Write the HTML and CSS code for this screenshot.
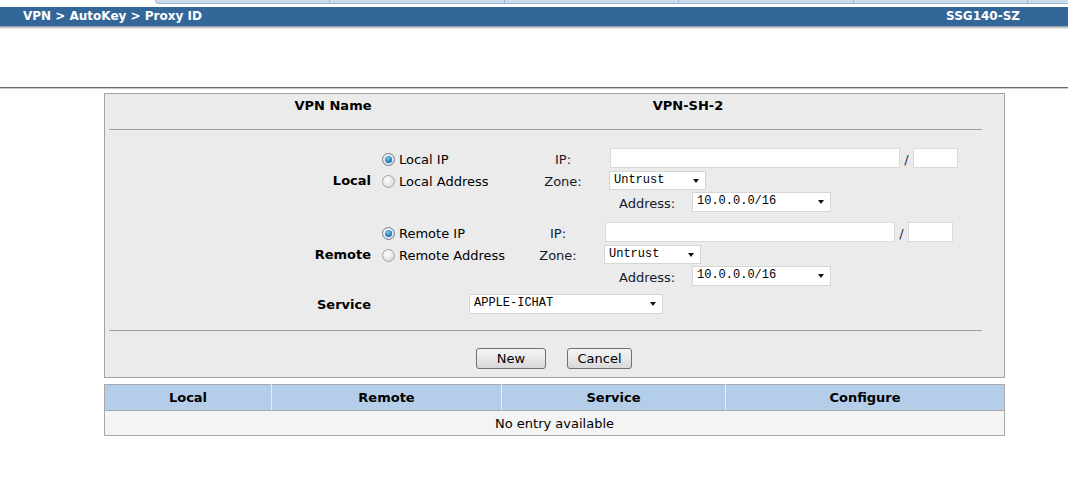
FILE: index.html
```html
<!DOCTYPE html>
<html>
<head>
<meta charset="utf-8">
<link rel="stylesheet" href="styles.css">
</head>
<body>
<div class="topnav">
  <div class="tabs">
    <span class="tab first"></span><span class="tab"></span><span class="tab"></span><span class="tab"></span><span class="tab"></span><span class="tab last"></span>
  </div>
  <div class="titlebar">
    <span class="crumb">VPN &gt; AutoKey &gt; Proxy ID</span>
    <span class="device">SSG140-SZ</span>
  </div>
  <div class="shadow"></div>
</div>
<div class="divider"></div>

<div class="formbox">
  <div class="namerow">
    <div class="namecol">VPN Name</div>
    <div class="valcol">VPN-SH-2</div>
  </div>
  <div class="rule"></div>

  <div class="section local">
    <div class="seclabel">Local</div>
    <div class="rows">
      <div class="row">
        <label class="radio"><span class="dot on"></span>Local IP</label>
        <span class="flabel">IP:</span>
        <span class="ipfield"><span class="input ip"></span><span class="slash">/</span><span class="input mask"></span></span>
      </div>
      <div class="row">
        <label class="radio"><span class="dot"></span>Local Address</label>
        <span class="flabel">Zone:</span>
        <span class="select zone">Untrust<i class="arrow"></i></span>
      </div>
      <div class="row addr">
        <span class="alabel">Address:</span>
        <span class="select address">10.0.0.0/16<i class="arrow"></i></span>
      </div>
    </div>
  </div>

  <div class="section remote">
    <div class="seclabel">Remote</div>
    <div class="rows">
      <div class="row">
        <label class="radio"><span class="dot on"></span>Remote IP</label>
        <span class="flabel">IP:</span>
        <span class="ipfield"><span class="input ip"></span><span class="slash">/</span><span class="input mask"></span></span>
      </div>
      <div class="row">
        <label class="radio"><span class="dot"></span>Remote Address</label>
        <span class="flabel">Zone:</span>
        <span class="select zone">Untrust<i class="arrow"></i></span>
      </div>
      <div class="row addr">
        <span class="alabel">Address:</span>
        <span class="select address">10.0.0.0/16<i class="arrow"></i></span>
      </div>
    </div>
  </div>

  <div class="servicerow">
    <div class="seclabel">Service</div>
    <span class="select service">APPLE-ICHAT<i class="arrow"></i></span>
  </div>
  <div class="rule lower"></div>

  <div class="buttons">
    <span class="btn new">New</span>
    <span class="btn cancel">Cancel</span>
  </div>
</div>

<table class="list">
  <thead>
    <tr><th class="c1">Local</th><th class="c2">Remote</th><th class="c3">Service</th><th class="c4">Configure</th></tr>
  </thead>
  <tbody>
    <tr><td colspan="4">No entry available</td></tr>
  </tbody>
</table>
</body>
</html>
```
FILE: styles.css
```css
html, body {
  margin: 0;
  padding: 0;
  background: #ffffff;
}
body {
  font-family: "DejaVu Sans", Verdana, sans-serif;
  font-size: 13px;
  color: #000;
  width: 1068px;
}

/* ---------- top navigation ---------- */
.tabs {
  height: 4px;
  display: flex;
  padding-left: 155px;
  border-bottom: 3px solid #ffffff;
}
.tab {
  width: 174px;
  height: 3px;
  background: #cbdbeb;
  border-left: 1px solid #9fb5cf;
  border-bottom: 1px solid #9fb5cf;
}
.tab.first { border-bottom-left-radius: 4px; }
.tab.last { width: 40px; }
.titlebar {
  height: 19px;
  background: #336699;
  color: #ffffff;
  font-weight: bold;
  font-size: 12px;
  line-height: 18px;
  display: flex;
  justify-content: space-between;
  padding: 0 48px 0 23px;
}
.shadow {
  height: 3px;
  background: linear-gradient(#7f8a96, #d4d4d4 60%, #f4f4f4);
}
.divider {
  margin-top: 58px;
  height: 1px;
  background: #6c6c6c;
  border-bottom: 1px solid #c8c8c8;
}

/* ---------- form box ---------- */
.formbox {
  margin: 4px 0 0 104px;
  width: 901px;
  box-sizing: border-box;
  background: #ebebeb;
  border: 1px solid #a4a4a4;
  padding: 0 22px 8px 4px;
}
.namerow {
  display: flex;
  height: 35px;
  align-items: flex-start;
  font-weight: bold;
  padding-top: 4px;
  line-height: 16px;
  box-sizing: border-box;
}
.namecol { width: 448px; text-align: center; }
.valcol { width: 262px; text-align: center; }
.rule {
  height: 1px;
  background: #a0a0a0;
}
.rule.lower { margin-top: 15px; }

.section {
  display: flex;
  align-items: center;
}
.section.local { margin-top: 17px; }
.section.remote { margin-top: 8px; }
.seclabel {
  width: 262px;
  text-align: right;
  font-weight: bold;
  flex: none;
  padding-top: 1px;
}
.rows {
  display: flex;
  flex-direction: column;
  margin-left: 11px;
}
.row {
  display: flex;
  align-items: center;
  height: 22px;
}
.radio {
  display: flex;
  align-items: center;
  width: 156px;
  padding-top: 2px;
}
.remote .radio { width: 151px; }
.dot {
  width: 11px;
  height: 11px;
  border-radius: 50%;
  border: 1px solid #a3a3a3;
  background: radial-gradient(circle at 40% 35%, #ffffff, #dedede 70%, #cfcfcf);
  margin-right: 4px;
  box-sizing: content-box;
  position: relative;
  flex: none;
}
.dot.on {
  border-color: #6d7e91;
}
.dot.on::after {
  content: "";
  position: absolute;
  left: 2px;
  top: 2px;
  width: 7px;
  height: 7px;
  border-radius: 50%;
  background: radial-gradient(circle at 40% 35%, #7fc6f2, #1b6fb1 70%, #0c3f73);
}
.flabel {
  width: 50px;
  text-align: center;
  color: #111a2a;
  padding-top: 2px;
}
.ipfield {
  display: flex;
  align-items: center;
  margin-left: 22px;
}
.input {
  height: 20px;
  box-sizing: border-box;
  background: #ffffff;
  border: 1px solid #dadada;
  display: block;
}
.input.ip { width: 290px; }
.input.mask { width: 45px; }
.slash {
  width: 13px;
  text-align: center;
  color: #1d2f50;
  padding-top: 2px;
}
.select {
  position: relative;
  display: block;
  height: 19px;
  box-sizing: border-box;
  background: #ffffff;
  border: 1px solid #d6d6d6;
  font-family: "Liberation Mono", monospace;
  font-size: 12px;
  line-height: 16px;
  padding-left: 4px;
  color: #000;
}
.arrow {
  position: absolute;
  right: 6px;
  top: 7px;
  width: 0;
  height: 0;
  border-left: 3.5px solid transparent;
  border-right: 3.5px solid transparent;
  border-top: 4px solid #111;
}
.select.zone { width: 97px; margin-left: 21px; }
.select.address { width: 139px; height: 20px; }
.select.service { width: 194px; height: 20px; margin-left: 98px; }
.row.addr { padding-left: 237px; }
.alabel {
  width: 59px;
  margin-right: 14px;
  color: #111a2a;
  padding-top: 2px;
}
.servicerow {
  display: flex;
  align-items: center;
  height: 22px;
  margin-top: 6px;
}

/* ---------- buttons ---------- */
.buttons {
  display: flex;
  padding-left: 367px;
  gap: 21px;
  margin-top: 17px;
}
.btn {
  display: block;
  height: 21px;
  box-sizing: border-box;
  border: 1px solid #707070;
  border-radius: 3px;
  background: linear-gradient(#f4f4f4, #e8e8e8 50%, #d8d8d8);
  text-align: center;
  line-height: 19px;
  font-size: 13px;
}
.btn.new { width: 70px; }
.btn.cancel { width: 65px; }

/* ---------- list table ---------- */
.list {
  margin: 6px 0 0 104px;
  width: 901px;
  border-collapse: collapse;
  border: 1px solid #a8a8a8;
  table-layout: fixed;
}
.list th {
  background: #b4cde9;
  height: 26px;
  padding: 0;
  font-weight: bold;
  border-right: 1px solid #e4ecf5;
  border-bottom: 1px solid #a8a8a8;
  box-sizing: border-box;
}
.list th.c1 { width: 167px; }
.list th.c2 { width: 230px; }
.list th.c3 { width: 224px; }
.list th.c4 { border-right: none; }
.list td {
  background: #f4f4f4;
  height: 24px;
  padding: 0;
  text-align: center;
}
```
